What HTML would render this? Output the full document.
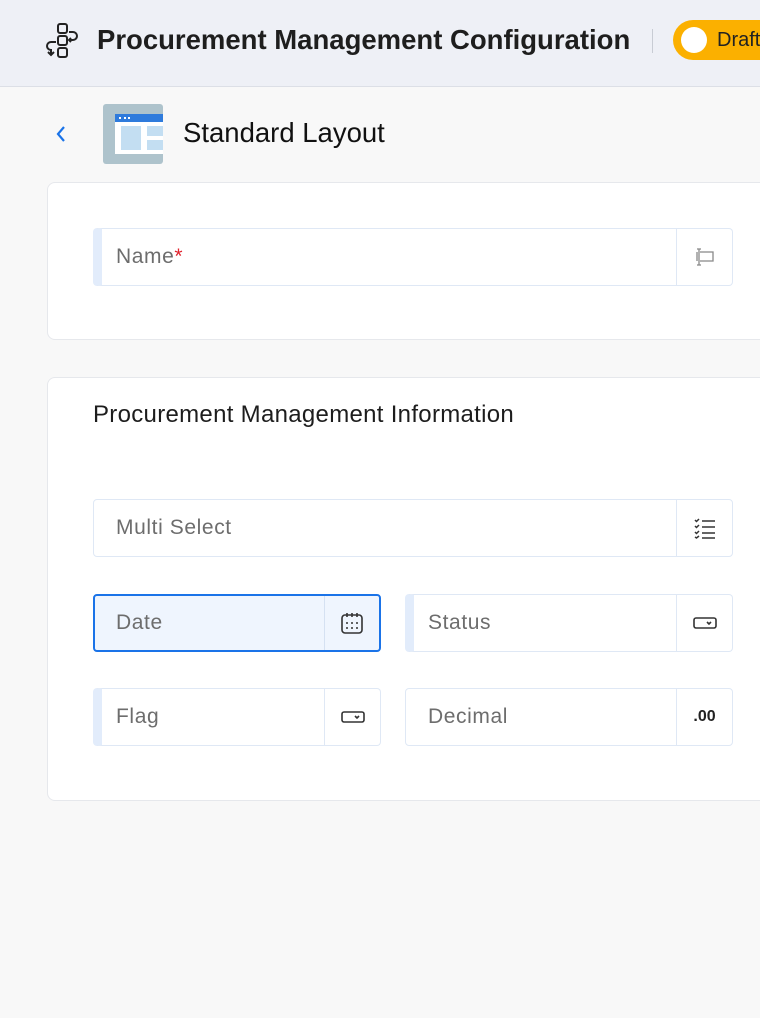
<!DOCTYPE html>
<html><head><meta charset="utf-8"><style>
*{box-sizing:border-box;margin:0;padding:0}
body{width:760px;height:1018px;overflow:hidden;background:#f8f8f8;font-family:"Liberation Sans",sans-serif;position:relative}
.hdr{position:absolute;left:0;top:0;width:760px;height:87px;background:#eef0f6;border-bottom:1px solid #dcdfe6}
.t{position:absolute;left:97px;top:24px;font-size:27.5px;font-weight:bold;color:#1e1e1e}
.sep{position:absolute;left:652px;top:29px;width:1px;height:24px;background:#c8ccd4}
.draft{position:absolute;left:673px;top:20px;width:120px;height:40px;border-radius:20px;background:#fbb000}
.knob{position:absolute;left:8px;top:7px;width:26px;height:26px;border-radius:50%;background:#fff}
.draft span{position:absolute;left:44px;top:9px;font-size:20px;color:#222}
.card{position:absolute;left:47px;width:740px;background:#fff;border:1px solid #e6e8ec;border-radius:8px}
.f{position:absolute;height:58px;border:1px solid #dfe8f5;border-radius:4px;background:#fff}
.f.m{border-left:9px solid #e2ecfb}
.f .l{position:absolute;left:22px;top:16px;font-size:21px;letter-spacing:0.6px;color:#6d6d6d}
.f.m .l{left:14px}
.f .ic{position:absolute;right:0;top:0;width:56px;height:100%;border-left:1px solid #dfe8f5;display:flex;align-items:center;justify-content:center}
</style></head><body>
<div class="hdr">
<svg style="position:absolute;left:44px;top:22px" width="38" height="38" viewBox="0 0 38 38" fill="none" stroke="#222" stroke-width="2"><rect x="14" y="2" width="9" height="9" rx="2"/><rect x="14" y="14" width="9" height="9" rx="2"/><rect x="14" y="26" width="9" height="9" rx="2"/><path d="M25 10h4a4 4 0 0 1 0 8h-4M27 16l-2 2 2 2"/><path d="M12 20H7a4 4 0 0 0 0 8v4M4 30l3 3 3-3"/></svg>
<div class="t">Procurement Management Configuration</div>
<div class="sep"></div>
<div class="draft"><div class="knob"></div><span>Draft</span></div>
</div>
<svg style="position:absolute;left:54px;top:124px" width="14" height="20" viewBox="0 0 14 20" fill="none" stroke="#1a73e8" stroke-width="2.2"><path d="M10 3l-6 7 6 7"/></svg>
<div style="position:absolute;left:103px;top:104px;width:60px;height:60px;background:#aec3cc;border-radius:3px"></div>
<div style="position:absolute;left:115px;top:114px;width:48px;height:40px;background:#fff"></div>
<div style="position:absolute;left:115px;top:114px;width:48px;height:8px;background:#2f7bdc"></div>
<div style="position:absolute;left:119px;top:117px;width:11px;height:2px;border-top:2px dotted #fff"></div>
<div style="position:absolute;left:121px;top:126px;width:20px;height:24px;background:#c3def2"></div>
<div style="position:absolute;left:147px;top:126px;width:16px;height:10px;background:#c3def2"></div>
<div style="position:absolute;left:147px;top:140px;width:16px;height:10px;background:#c3def2"></div>
<div style="position:absolute;left:183px;top:117px;font-size:27.5px;color:#111">Standard Layout</div>

<div class="card" style="top:182px;height:158px"></div>
<div class="f m" style="left:93px;top:228px;width:640px"><div class="l">Name<span style="color:#e0242e">*</span></div><div class="ic"><svg width="24" height="20" viewBox="0 0 24 20" fill="none" stroke="#888" stroke-width="1.3"><path d="M7 5h13v9H7"/><path d="M4 5v9"/><path d="M6 2v16M4 2h4M4 18h4"/></svg></div></div>

<div class="card" style="top:377px;height:424px"></div>
<div style="position:absolute;left:93px;top:401px;font-size:24px;letter-spacing:0.3px;color:#1d1d1d">Procurement Management Information</div>
<div class="f" style="left:93px;top:499px;width:640px"><div class="l">Multi Select</div><div class="ic"><svg width="24" height="22" viewBox="0 0 24 22" fill="none" stroke="#333" stroke-width="1.5"><path d="M2 3l1.5 1.5L6 2M2 9l1.5 1.5L6 8M2 15l1.5 1.5L6 14M2 20l1.5 1L6 19"/><path d="M9 4h13M9 10h13M9 16h13M9 21h13"/></svg></div></div>
<div class="f" style="left:93px;top:594px;width:288px;border:2px solid #1a73e8;background:#eff5fe"><div class="l" style="left:21px;top:15px">Date</div><div class="ic" style="width:55px;border-left-color:#d5e1f2"><svg width="24" height="24" viewBox="0 0 24 24" fill="none" stroke="#333" stroke-width="1.6"><rect x="2" y="4" width="20" height="18" rx="3"/><path d="M7 2v4M12 2v4M17 2v4"/><g fill="#333" stroke="none"><circle cx="7" cy="12" r="1"/><circle cx="12" cy="12" r="1"/><circle cx="17" cy="12" r="1"/><circle cx="7" cy="17" r="1"/><circle cx="12" cy="17" r="1"/><circle cx="17" cy="17" r="1"/></g></svg></div></div>
<div class="f m" style="left:405px;top:594px;width:328px"><div class="l">Status</div><div class="ic"><svg width="24" height="14" viewBox="0 0 24 14" fill="none" stroke="#333" stroke-width="1.6"><rect x="1" y="2" width="22" height="10" rx="2"/><path d="M14 6l2 2 2-2"/></svg></div></div>
<div class="f m" style="left:93px;top:688px;width:288px"><div class="l">Flag</div><div class="ic"><svg width="24" height="14" viewBox="0 0 24 14" fill="none" stroke="#333" stroke-width="1.6"><rect x="1" y="2" width="22" height="10" rx="2"/><path d="M14 6l2 2 2-2"/></svg></div></div>
<div class="f" style="left:405px;top:688px;width:328px"><div class="l">Decimal</div><div class="ic" style="font-size:16px;font-weight:bold;color:#222">.00</div></div>
</body></html>
